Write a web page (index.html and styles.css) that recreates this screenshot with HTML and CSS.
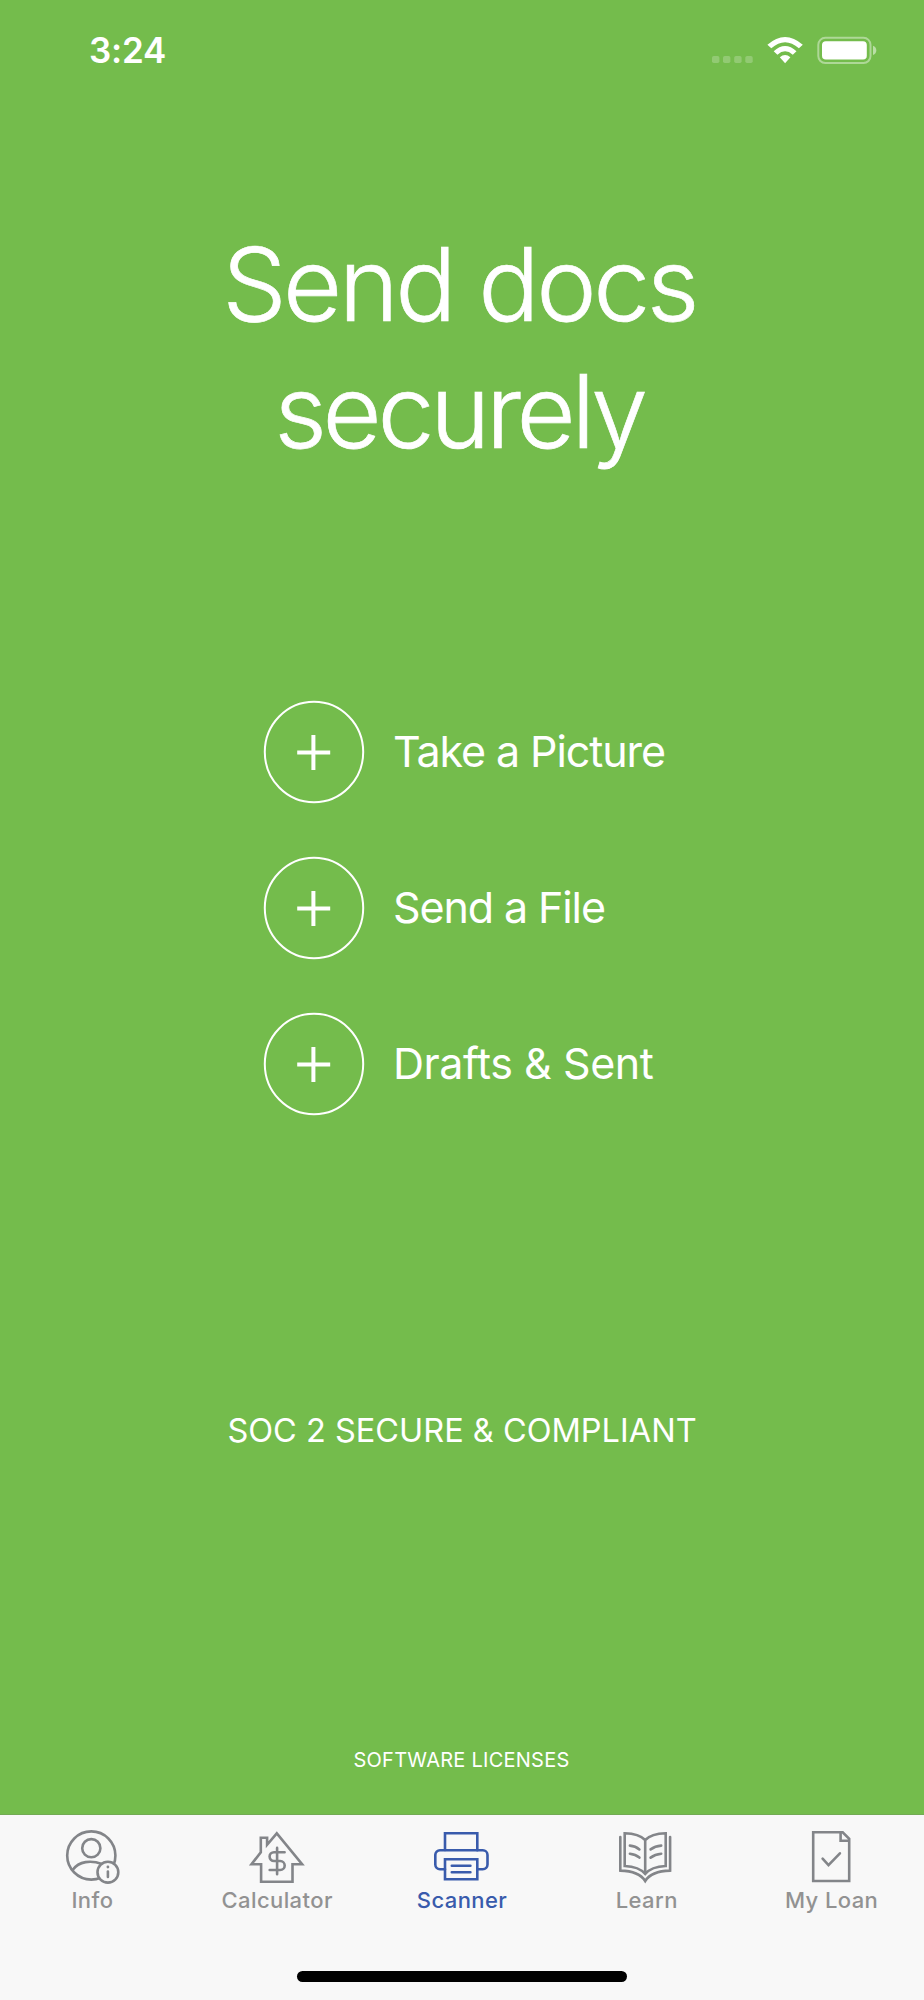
FILE: index.html
```html
<!DOCTYPE html>
<html lang="en">
<head>
  <meta charset="UTF-8" />
  <meta name="viewport" content="width=device-width, initial-scale=1.0"/>
  <title>Scanner</title>
  <link rel="stylesheet" href="styles.css">
</head>
<body>
  <div class="status">
    <span class="time">3:24</span>
    <svg class="status-icons" width="170" height="30" viewBox="0 0 170 30">
      <g fill="#fff" fill-opacity="0.22">
        <rect x="2" y="20" width="7.4" height="7" rx="1.8"/>
        <rect x="13" y="20" width="7.4" height="7" rx="1.8"/>
        <rect x="24.2" y="20" width="7.4" height="7" rx="1.8"/>
        <rect x="35.3" y="20" width="7.4" height="7" rx="1.8"/>
      </g>
      <g fill="#fff">
        <path d="M57.4 8.8 Q75.1 -6.8 92.8 8.8 L88.9 12.3 Q75.1 0.2 61.3 12.3 Z"/>
        <path d="M63.7 15.2 Q75.1 4.8 86.5 15.2 L82.8 18.7 Q75.1 12 67.4 18.7 Z"/>
        <path d="M69.8 21.3 Q75.1 16.7 80.4 21.3 L75.1 27.3 Z"/>
      </g>
      <rect x="108.3" y="1.8" width="52.2" height="25.2" rx="7" fill="none" stroke="#fff" stroke-opacity="0.42" stroke-width="2"/>
      <rect x="112" y="5.2" width="44.8" height="18.4" rx="3.8" fill="#fff"/>
      <path d="M163 9.8 q3.3 1.4 3.3 4.6 t-3.3 4.6 z" fill="#fff" fill-opacity="0.5"/>
    </svg>
  </div>

  <main>
    <h1>Send docs<br><span class="second">securely</span></h1>

    <div class="actions">
      <div class="action">
        <svg width="102" height="104" viewBox="0 0 102 104"><ellipse cx="51" cy="52" rx="49.2" ry="50.3"/><path d="M34.2 52.5h33M50.4 35v35"/></svg>
        <span>Take a Picture</span>
      </div>
      <div class="action">
        <svg width="102" height="104" viewBox="0 0 102 104"><ellipse cx="51" cy="52" rx="49.2" ry="50.3"/><path d="M34.2 52.5h33M50.4 35v35"/></svg>
        <span>Send a File</span>
      </div>
      <div class="action">
        <svg width="102" height="104" viewBox="0 0 102 104"><ellipse cx="51" cy="52" rx="49.2" ry="50.3"/><path d="M34.2 52.5h33M50.4 35v35"/></svg>
        <span class="drafts">Drafts &amp; Sent</span>
      </div>
    </div>

    <p class="soc">SOC 2 SECURE &amp; COMPLIANT</p>
    <p class="licenses">SOFTWARE LICENSES</p>
  </main>

  <nav>
    <div class="tabs">
      <div class="tab">
        <svg width="60" height="56" viewBox="0 0 60 56">
          <circle cx="29.3" cy="27.5" r="24.1"/>
          <circle cx="29.3" cy="20.2" r="9.1"/>
          <path d="M10.6 42 C17 33 29 32 40 36"/>
          <circle class="badge" cx="45.9" cy="44.2" r="10.4"/>
          <path d="M45.9 43.5v5.5"/>
          <circle class="dot" cx="45.9" cy="39" r="1.4"/>
        </svg>
        <span>Info</span>
      </div>
      <div class="tab">
        <svg width="60" height="56" viewBox="0 0 60 56">
          <path d="M29.8 5.4 L55.1 36.3 H45.5 V53.7 H14.1 V36.3 H4.5 L13.8 24.3 V9.7 H20.1 V16.8 Z"/>
          <path d="M30.1 19.9V46.3M37.6 24.2H27a4.3 4.3 0 0 0 0 8.8h6.2a4.5 4.5 0 0 1 0 9H22.7"/>
        </svg>
        <span>Calculator</span>
      </div>
      <div class="tab active">
        <svg width="60" height="56" viewBox="0 0 60 56">
          <path d="M13 22V5.3h32.3v17"/>
          <path d="M13 41.2H8a4.7 4.7 0 0 1-4.7-4.7V27A4.7 4.7 0 0 1 8 22.3h42.8a4.7 4.7 0 0 1 4.7 4.7v9.5a4.7 4.7 0 0 1-4.7 4.7h-5.5"/>
          <path d="M13 31.3h32.3v20H13zM19.8 37.7h18.6M19.8 44.3h18.6"/>
        </svg>
        <span>Scanner</span>
      </div>
      <div class="tab">
        <svg width="60" height="56" viewBox="0 0 60 56">
          <path d="M28.2 12 Q22 5.4 7.7 5.2 V38 Q22 38.5 28.2 46 Q34.4 38.5 48.7 38 V5.2 Q34.4 5.4 28.2 12 Z M28.2 12V46"/>
          <path d="M3.3 9V42.6Q22 43 28.2 53Q34.4 43 53.1 42.6V9"/>
          <path d="M12.9 17.6Q18.5 18 22.4 21.4M12.9 25.7Q18.5 26.3 22.4 29.6M44.2 17.6Q38 18 33.6 21.4M44.2 25.7Q38 26.3 33.6 29.6"/>
        </svg>
        <span>Learn</span>
      </div>
      <div class="tab">
        <svg width="60" height="56" viewBox="0 0 60 56">
          <path d="M11.2 4.3H40.7L47.2 10.9V53H11.2ZM38.6 4.3V12.7H47.2"/>
          <path d="M20.6 30.7L26.5 37.2L37.9 25.3"/>
        </svg>
        <span>My Loan</span>
      </div>
    </div>
    <div class="home"></div>
  </nav>
</body>
</html>
```
FILE: styles.css
```css
* {
  box-sizing: border-box;
}
body {
  margin: 0;
  height: 2000px;
  display: flex;
  flex-direction: column;
  background-color: #74bc4c;
  color: white;
  font-family: Inter, "Liberation Sans", sans-serif;
}
.status {
  height: 100px;
  padding: 29px 46px 0 89px;
  display: flex;
  justify-content: space-between;
}
.time {
  font-size: 35px;
  line-height: 43px;
  font-weight: 600;
  letter-spacing: -0.2px;
}
.status-icons {
  margin: 7px -2px 0 0;
}
main {
  flex: 1;
  display: flex;
  flex-direction: column;
  align-items: center;
}
h1 {
  margin: 121px 0 0;
  padding-right: 6px;
  font-size: 102px;
  line-height: 127px;
  font-weight: 300;
  letter-spacing: -3.5px;
  text-align: center;
  -webkit-text-stroke: 0.7px white;
}
.second {
  letter-spacing: -4.3px;
}
.actions {
  width: 400px;
  margin-top: 224.6px;
  padding-left: 1px;
  display: flex;
  flex-direction: column;
  gap: 52.2px;
}
.action {
  display: flex;
  align-items: center;
  gap: 28px;
  font-size: 43px;
  line-height: 52px;
  letter-spacing: -1.1px;
  white-space: nowrap;
}
.action span {
  padding-bottom: 2px;
}
.drafts {
  letter-spacing: -0.45px;
}
.action svg {
  flex-shrink: 0;
  fill: none;
  stroke: white;
  stroke-width: 2;
}
.action path {
  stroke-width: 4;
}
p {
  margin: 0;
}
.soc {
  margin-top: 295px;
  font-size: 32.5px;
  line-height: 40px;
}
.licenses {
  margin-top: 297px;
  padding-right: 1px;
  font-size: 20px;
  line-height: 24px;
  letter-spacing: 0.25px;
}
nav {
  height: 186px;
  border-top: 1px solid #72aa54;
  background-color: #f8f8f8;
}
.tabs {
  display: flex;
  padding-top: 13px;
}
.tab {
  flex: 1;
  display: flex;
  flex-direction: column;
  align-items: center;
  color: #929292;
  font-size: 22px;
  line-height: 33px;
  font-weight: 500;
  letter-spacing: 0.4px;
}
.tab svg {
  fill: none;
  stroke: #838589;
  stroke-width: 2.6;
  stroke-linecap: round;
}
.tab.active {
  color: #395bac;
}
.tab.active svg {
  stroke: #395bac;
}
.tab .badge {
  fill: #f8f8f8;
}
.tab .dot {
  fill: #838589;
  stroke: none;
}
.home {
  width: 330px;
  height: 11px;
  margin: 54px auto 0;
  border-radius: 6px;
  background-color: black;
}
```
